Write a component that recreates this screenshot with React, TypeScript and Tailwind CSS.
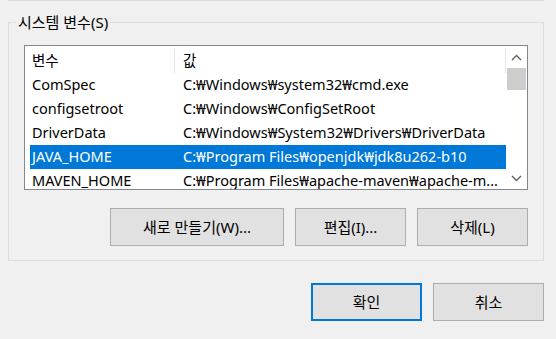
const rows = [
	{ name: "ComSpec", value: "C:₩Windows₩system32₩cmd.exe" },
	{ name: "configsetroot", value: "C:₩Windows₩ConfigSetRoot" },
	{ name: "DriverData", value: "C:₩Windows₩System32₩Drivers₩DriverData" },
	{ name: "JAVA_HOME", value: "C:₩Program Files₩openjdk₩jdk8u262-b10", selected: true },
	{ name: "MAVEN_HOME", value: "C:₩Program Files₩apache-maven₩apache-m..." },
]

const Chevron = ({ up }: { up?: boolean }) => (
	<svg width="11" height="7" viewBox="0 0 11 7" className="block">
		<path
			d={up ? "M1 6 L5.5 1.5 L10 6" : "M1 1 L5.5 5.5 L10 1"}
			fill="none"
			stroke="#606060"
			strokeWidth="1.4"
		/>
	</svg>
)

const Button = ({ label, className, primary }: { label: string; className: string; primary?: boolean }) => (
	<button
		className={
			"h-[38px] bg-[#e1e1e1] text-[15px] text-black flex items-center justify-center " +
			(primary ? "border-2 border-[#0078d7] " : "border border-[#adadad] ") +
			className
		}
	>
		{label}
	</button>
)

const App = () => {
	return (
		<div
			className="w-[556px] h-[339px] bg-[#f0f0f0] overflow-hidden text-black"
			style={{ fontFamily: '"Noto Sans", "Noto Sans CJK KR", sans-serif' }}
		>
			<div className="ml-[8px] w-[536px] h-px bg-[#dcdcdc]" />

			{/* system variables group */}
			<div className="relative ml-[8px] mt-[21px] w-[536px] h-[239px] border border-[#dcdcdc] pt-[22px] pl-[15px]">
				<span className="absolute left-[7px] -top-[12px] px-[2px] bg-[#f0f0f0] text-[15px] leading-[22px]">
					시스템 변수(S)
				</span>

				<div className="w-[504px] h-[145px] border border-[#828790] bg-white flex overflow-hidden">
					<div className="flex-1 flex flex-col pl-[5px] text-[14.5px]">
						<div className="h-[27px] flex items-center shrink-0 pt-[2px]">
							<div className="w-[145px] h-full pl-[2px] flex items-center border-r border-[#e5e5e5]">변수</div>
							<div className="flex-1 h-full pl-[8px] flex items-center border-r border-[#e5e5e5]">값</div>
						</div>
						{rows.map((r) => (
							<div
								key={r.name}
								className={
									"h-[24px] shrink-0 flex items-center whitespace-nowrap " +
									(r.selected ? "bg-[#0078d7] text-white" : "")
								}
							>
								<div className="w-[145px] pl-[2px]">{r.name}</div>
								<div className="flex-1 pl-[8px] overflow-hidden">{r.value}</div>
							</div>
						))}
					</div>
					<div className="w-[21px] flex flex-col items-center bg-white">
						<div className="h-[22px] flex items-center justify-center">
							<Chevron up />
						</div>
						<div className="w-[19px] h-[22px] bg-[#cdcdcd]" />
						<div className="flex-1" />
						<div className="h-[22px] flex items-center justify-center">
							<Chevron />
						</div>
					</div>
				</div>

				<div className="mt-[18px] w-[504px] flex justify-end gap-[11px]">
					<Button label="새로 만들기(W)..." className="w-[174px]" />
					<Button label="편집(I)..." className="w-[111px]" />
					<Button label="삭제(L)" className="w-[111px]" />
				</div>
			</div>

			<div className="mt-[22px] w-[544px] flex justify-end gap-[11px]">
				<Button label="확인" className="w-[111px]" primary />
				<Button label="취소" className="w-[111px]" />
			</div>
		</div>
	)
}

export default App
